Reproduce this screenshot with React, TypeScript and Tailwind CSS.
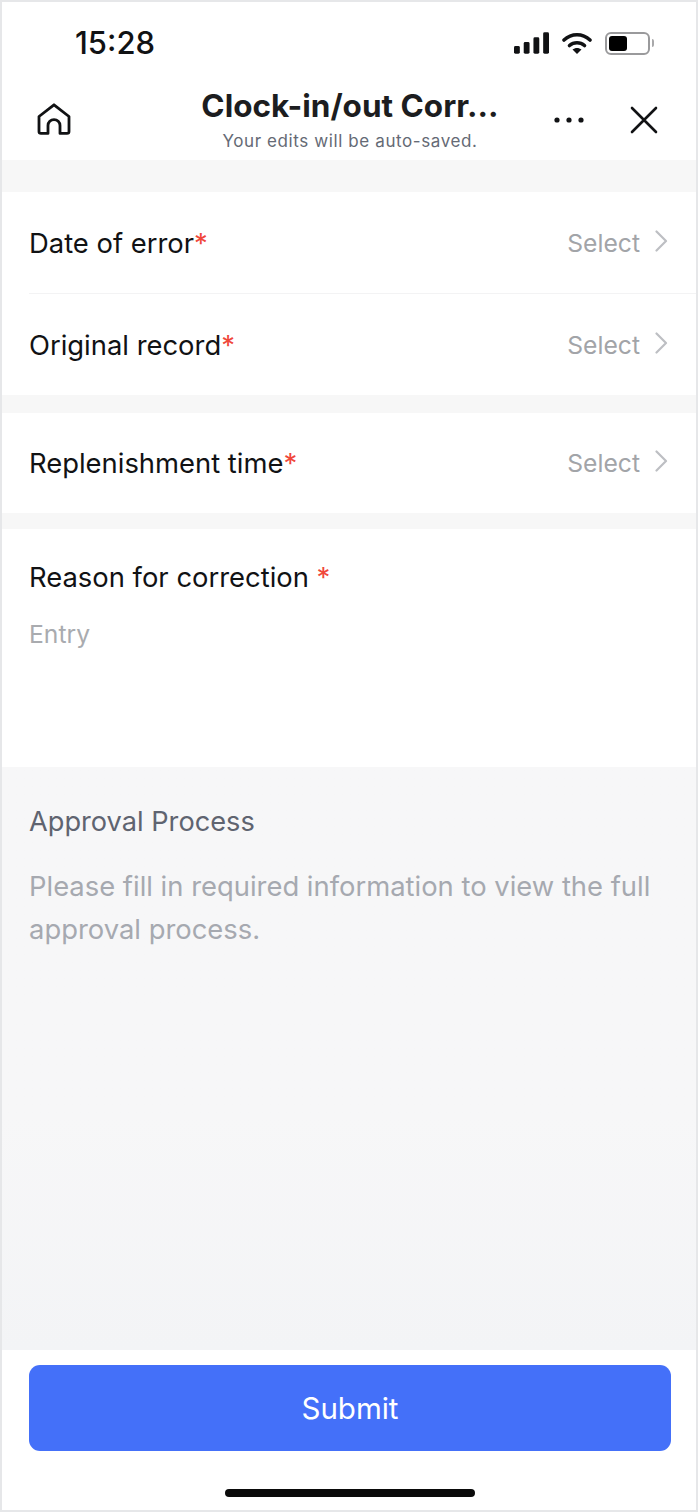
const FONT = "font-['Inter',sans-serif]";

const Row = ({ label, heightClass, line }: { label: string; heightClass: string; line?: boolean }) => (
  <div className={`flex flex-col bg-white ${heightClass}`}>
    <div className="flex flex-1 items-center justify-between pl-[27px] pr-[28px]">
      <div className="text-[27.4px] leading-[34px] text-[#111214]">
        {label}
        <span className="text-[#f0473a]">*</span>
      </div>
      <div className="flex items-center gap-[15px]">
        <span className="text-[24.7px] leading-[32px] text-[#a2a4a8]">Select</span>
        <svg width="13" height="22" viewBox="0 0 13 22" fill="none" className="-mt-1">
          <path d="M1.5 1.5L11 11L1.5 20.5" stroke="#bdbfc3" strokeWidth="2.2" strokeLinecap="round" strokeLinejoin="round" />
        </svg>
      </div>
    </div>
    {line && <div className="ml-[27px] h-px bg-[#f3f3f4]" />}
  </div>
);

export default function App() {
  return (
    <div className={`${FONT} h-[1512px] w-[698px] border-2 border-[#e6e7e9] bg-white`}>
      <div className="flex h-[1508px] flex-col">
        {/* status bar */}
        <div className="flex h-[78px] items-center justify-between pl-[73px] pr-[42px] pt-[4px]">
          <span className="text-[31px] font-medium leading-[36px] text-[#111214]">15:28</span>
          <div className="flex items-center gap-[13px]">
            <svg width="35" height="22" viewBox="0 0 36 22" fill="#111214">
              <rect x="0" y="14" width="6" height="8" rx="1.5" />
              <rect x="10" y="10" width="6" height="12" rx="1.5" />
              <rect x="20" y="5" width="6" height="17" rx="1.5" />
              <rect x="30" y="0" width="6" height="22" rx="1.5" />
            </svg>
            <svg width="30" height="22" viewBox="0 0 30 22" fill="none">
              <path d="M2 8C9.5 1 20.5 1 28 8" stroke="#111214" strokeWidth="3.6" strokeLinecap="round" />
              <path d="M7.5 13.5C11.8 9.8 18.2 9.8 22.5 13.5" stroke="#111214" strokeWidth="3.6" strokeLinecap="round" />
              <path d="M15 22L10.5 17.6C13 15.5 17 15.5 19.5 17.6Z" fill="#111214" />
            </svg>
            <div className="flex items-center gap-[2px]">
              <div className="flex h-[23px] w-[45px] items-center rounded-[6px] border-2 border-[#9a9a9c] p-[2px]">
                <div className="h-[15px] w-[18px] rounded-[3px] bg-black" />
              </div>
              <div className="h-[8px] w-[2px] rounded-r-sm bg-[#a8a8aa]" />
            </div>
          </div>
        </div>

        {/* nav bar */}
        <div className="relative flex h-[80px] items-center justify-between pl-[35px] pr-[38px]">
          <svg width="34" height="32" viewBox="0 0 34 32" fill="none" className="-mt-[2px]">
            <path
              d="M2 13.5L17 1.8L32 13.5V28.5C32 29.6 31.2 30.4 30 30.4H23V22.5C23 19.2 20.3 16.6 17 16.6C13.7 16.6 11 19.2 11 22.5V30.4H4C2.8 30.4 2 29.6 2 28.5Z"
              stroke="#111214"
              strokeWidth="2.8"
              strokeLinejoin="round"
            />
          </svg>
          <div className="absolute left-0 right-0 top-[7px] flex flex-col items-center pl-[2px]">
            <div className="text-[31.5px] font-bold leading-[38px] text-[#1c1d20]">Clock-in/out Corr...</div>
            <div className="mt-[5px] text-[17px] leading-[22px] tracking-[0.6px] text-[#656a75]">Your edits will be auto-saved.</div>
          </div>
          <div className="flex items-center gap-[45px]">
            <svg width="32" height="8" viewBox="0 0 32 8" fill="#111214">
              <circle cx="4" cy="4" r="2.6" />
              <circle cx="16" cy="4" r="2.6" />
              <circle cx="28" cy="4" r="2.6" />
            </svg>
            <svg width="28" height="28" viewBox="0 0 28 28" fill="none">
              <path d="M2 2L26 26M26 2L2 26" stroke="#111214" strokeWidth="2.6" strokeLinecap="round" />
            </svg>
          </div>
        </div>

        <div className="h-[32px] bg-[#f7f7f7]" />
        <Row label="Date of error" heightClass="h-[102px]" line />
        <Row label="Original record" heightClass="h-[101px]" />
        <div className="h-[18px] bg-[#f7f7f7]" />
        <Row label="Replenishment time" heightClass="h-[100px]" />
        <div className="h-[16px] bg-[#f7f7f7]" />

        {/* reason */}
        <div className="h-[238px] bg-white pl-[27px] pt-[31px]">
          <div className="text-[27.4px] leading-[34px] text-[#111214]">
            Reason for correction <span className="text-[#f0473a]">*</span>
          </div>
          <div className="mt-[21px] text-[24.7px] leading-[38px] text-[#a9abaf]">Entry</div>
        </div>

        {/* approval */}
        <div className="flex-1 bg-gradient-to-b from-[#f7f7f8] via-[#f7f7f8] via-60% to-[#f3f4f6] pl-[27px] pr-[40px] pt-[37px]">
          <div className="text-[27.2px] leading-[36px] text-[#5f6470]">Approval Process</div>
          <div className="mt-[25px] text-[27.4px] leading-[43px] text-[#a6a9b0]">
            Please fill in required information to view the full approval process.
          </div>
        </div>

        {/* footer */}
        <div className="flex h-[160px] flex-col items-center bg-white pl-[2px] pt-[15px]">
          <button className="h-[86px] w-[642px] rounded-[11px] bg-[#4470f9] text-[29.5px] text-white">Submit</button>
          <div className="mt-[38px] h-[8px] w-[250px] rounded-full bg-[#0a0a0a]" />
        </div>
      </div>
    </div>
  );
}
